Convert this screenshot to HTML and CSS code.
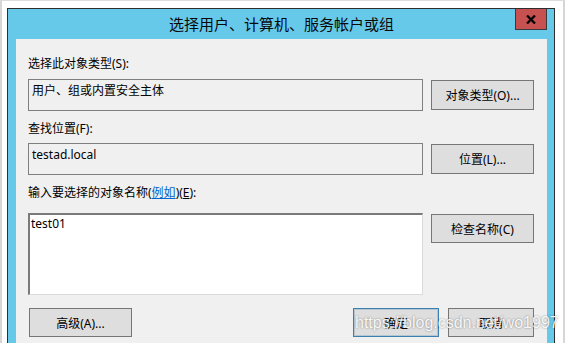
FILE: index.html
```html
<!DOCTYPE html>
<html lang="zh-CN">
<head>
  <meta charset="UTF-8" />
  <title>选择用户、计算机、服务帐户或组</title>
  <link rel="stylesheet" href="styles.css">
</head>
<body>

  <div class="shot">
    <div class="window">
      <div class="titlebar">
        <span class="title">选择用户、计算机、服务帐户或组</span>
        <div class="close">
          <svg width="10" height="9" viewBox="0 0 10 9">
            <path d="M1 0.5 L9 8.5 M9 0.5 L1 8.5" stroke="#000" stroke-width="2.3" fill="none" />
          </svg>
        </div>
      </div>

      <div class="content">
        <div class="label label-first">选择此对象类型(S):</div>
        <div class="row">
          <div class="field">用户、组或内置安全主体</div>
          <button class="btn">对象类型(O)...</button>
        </div>

        <div class="label">查找位置(F):</div>
        <div class="row">
          <div class="field">testad.local</div>
          <button class="btn">位置(L)...</button>
        </div>

        <div class="label label-names">输入要选择的对象名称(<a href="#">例如</a>)(<u>E</u>):</div>
        <div class="row">
          <div class="names">test01</div>
          <button class="btn btn-check">检查名称(C)</button>
        </div>

        <div class="actions">
          <button class="btn btn-advanced">高级(A)...</button>
          <div class="actions-right">
            <button class="btn btn-small btn-default">确定</button>
            <button class="btn btn-small">取消</button>
          </div>
        </div>
      </div>
    </div>
  </div>

  <div class="watermark">https://blog.csdn.net/wo1997</div>

</body>
</html>
```

FILE: styles.css
```css
html, body {
  margin: 0;
  overflow: hidden;
  background-color: #fff;
}

body {
  font-family: "Noto Sans", "Noto Sans CJK SC", sans-serif;
  font-size: 12px;
  color: #000;
}

.shot {
  width: 565px;
  height: 343px;
  overflow: hidden;
  border-left: 2px solid #d6d6d6;
  border-top: 1px solid #dcdcdc;
  border-right: 2px solid #d6d6d6;
  padding: 7px 0 0 5px;
  box-sizing: border-box;
}

.window {
  width: 548px;
  box-sizing: border-box;
  border: 1px solid #2e2e2e;
  background-color: #66c9ea;
  padding: 0 7px 0 8px;
}

.titlebar {
  position: relative;
  height: 30px;
  display: flex;
  align-items: center;
  justify-content: center;
}

.title {
  font-family: "Noto Sans CJK SC", sans-serif;
  font-size: 15px;
  line-height: 20px;
  color: #0a0a0a;
}

.close {
  position: absolute;
  top: 0;
  right: 0;
  width: 32px;
  height: 21px;
  box-sizing: border-box;
  background-color: #c75050;
  border: 1px solid #3a3a3a;
  border-top: none;
  display: flex;
  align-items: center;
  justify-content: center;
}

.content {
  background-color: #f0f0f0;
  padding: 17px 13px 30px 12px;
}

.label {
  line-height: 16px;
  margin-top: 10px;
  margin-bottom: 6px;
}

.label-first {
  margin-top: 0;
  margin-bottom: 7px;
}

.label-names {
  margin-bottom: 12px;
}

.label a {
  color: #0066cc;
  text-decoration: underline;
}

.row {
  display: grid;
  grid-template-columns: 395px 103px;
  column-gap: 8px;
  align-items: start;
}

.field {
  height: 32px;
  box-sizing: border-box;
  border: 1px solid #7f7f7f;
  padding: 3px 3px;
  line-height: 16px;
}

.names {
  height: 82px;
  box-sizing: border-box;
  background-color: #fff;
  border-style: solid;
  border-width: 2px 1px 1px 2px;
  border-color: #7a7a7a #dadada #dadada #7a7a7a;
  padding: 1px 1px;
  line-height: 16px;
}

.btn {
  font-family: inherit;
  font-size: 12px;
  color: #000;
  background-color: #dedede;
  border: 1px solid #767676;
  margin: 1px 0 0 0;
  padding: 0;
  height: 30px;
  box-sizing: border-box;
  cursor: pointer;
}

.btn-check {
  height: 29px;
}

.actions {
  display: flex;
  justify-content: space-between;
  margin-top: 13px;
}

.actions .btn {
  margin: 0;
  height: 29px;
}

.btn-advanced {
  width: 103px;
  margin-left: 1px !important;
}

.actions-right {
  display: flex;
  gap: 9px;
}

.btn-small {
  width: 86px;
}

.btn-default {
  border-color: #3c7fb1;
  box-shadow: inset 0 0 0 1px rgba(60, 127, 177, 0.25);
}

.watermark {
  position: absolute;
  left: 355px;
  top: 314px;
  font-family: "Liberation Sans", Arial, sans-serif;
  font-size: 16px;
  line-height: 18px;
  color: rgba(255, 255, 255, 0.92);
  text-shadow: 0 0 2px rgba(0, 0, 0, 0.45);
  white-space: nowrap;
}
```
